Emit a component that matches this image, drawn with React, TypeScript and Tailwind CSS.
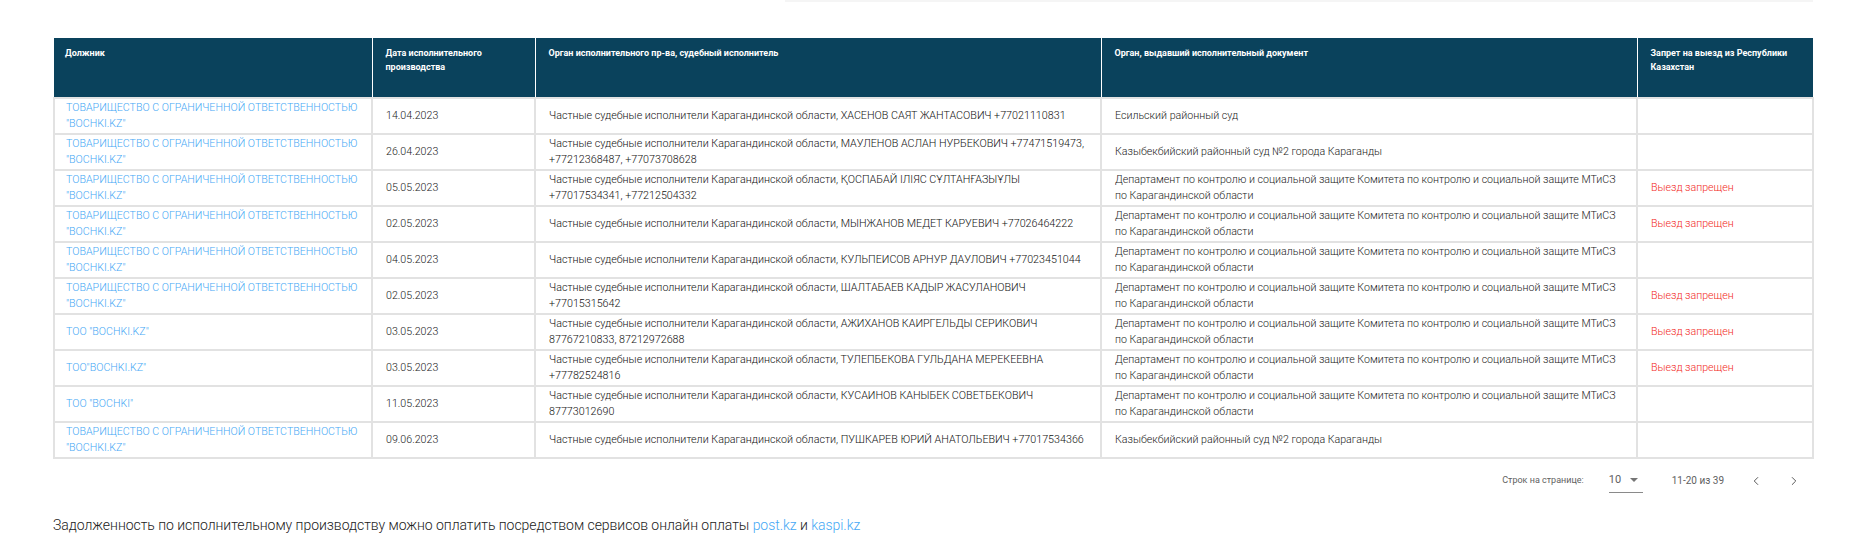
import { ChevronLeft, ChevronRight } from "lucide-react";

const dep = "Департамент по контролю и социальной защите Комитета по контролю и социальной защите МТиСЗ по Карагандинской области";
const prefix = "Частные судебные исполнители Карагандинской области, ";
const longName = 'ТОВАРИЩЕСТВО С ОГРАНИЧЕННОЙ ОТВЕТСТВЕННОСТЬЮ "BOCHKI.KZ"';

const rows = [
  { name: longName, date: "14.04.2023", org: prefix + "ХАСЕНОВ САЯТ ЖАНТАСОВИЧ +77021110831", doc: "Есильский районный суд", ban: false },
  { name: longName, date: "26.04.2023", org: prefix + "МАУЛЕНОВ АСЛАН НУРБЕКОВИЧ +77471519473, +77212368487, +77073708628", doc: "Казыбекбийский районный суд №2 города Караганды", ban: false },
  { name: longName, date: "05.05.2023", org: prefix + "ҚОСПАБАЙ ІЛІЯС СҰЛТАНҒАЗЫҰЛЫ +77017534341, +77212504332", doc: dep, ban: true },
  { name: longName, date: "02.05.2023", org: prefix + "МЫНЖАНОВ МЕДЕТ КАРУЕВИЧ +77026464222", doc: dep, ban: true },
  { name: longName, date: "04.05.2023", org: prefix + "КУЛЬПЕИСОВ АРНУР ДАУЛОВИЧ +77023451044", doc: dep, ban: false },
  { name: longName, date: "02.05.2023", org: prefix + "ШАЛТАБАЕВ КАДЫР ЖАСУЛАНОВИЧ +77015315642", doc: dep, ban: true },
  { name: 'ТОО "BOCHKI.KZ"', date: "03.05.2023", org: prefix + "АЖИХАНОВ КАИРГЕЛЬДЫ СЕРИКОВИЧ 87767210833, 87212972688", doc: dep, ban: true },
  { name: 'ТОО"BOCHKI.KZ"', date: "03.05.2023", org: prefix + "ТУЛЕПБЕКОВА ГУЛЬДАНА МЕРЕКЕЕВНА +77782524816", doc: dep, ban: true },
  { name: 'ТОО "BOCHKI"', date: "11.05.2023", org: prefix + "КУСАИНОВ КАНЫБЕК СОВЕТБЕКОВИЧ 87773012690", doc: dep, ban: false },
  { name: longName, date: "09.06.2023", org: prefix + "ПУШКАРЕВ ЮРИЙ АНАТОЛЬЕВИЧ +77017534366", doc: "Казыбекбийский районный суд №2 города Караганды", ban: false },
];

const headers = [
  { label: "Должник", w: "w-[318px]", pl: "pl-[11px]" },
  { label: "Дата исполнительного производства", w: "w-[163px]", pl: "pl-[13px]" },
  { label: "Орган исполнительного пр-ва, судебный исполнитель", w: "w-[566px]", pl: "pl-[13px]" },
  { label: "Орган, выдавший исполнительный документ", w: "w-[536px]", pl: "pl-[13px]" },
  { label: "Запрет на выезд из Республики Казахстан", w: "w-[176px]", pl: "pl-[13px]" },
];

const App = () => {
  return (
    <div className="w-[1855px] h-[534px] overflow-hidden bg-white font-['Roboto',sans-serif]">
      <div className="flex justify-end pr-[42px]">
        <div className="w-[1028px] h-[2px] bg-[#f5f5f5]" />
      </div>

      <div className="pl-[53px] pr-[42px] pt-[36px]">
        <table className="w-[1759px] table-fixed border-collapse">
          <thead>
            <tr className="h-[60px] bg-[#0a425c]">
              {headers.map((h) => (
                <th key={h.label} className={`${h.w} ${h.pl} align-top border-x border-white first:border-l-0 last:border-r-0 pr-[12px] pt-[8px] text-left text-[9px] leading-[14px] font-bold text-white`}>
                  {h.label}
                </th>
              ))}
            </tr>
          </thead>
          <tbody>
            {rows.map((r, i) => (
              <tr key={i} className="h-[36px] text-[10.65px] leading-[16px] font-light text-[#212121]">
                <td className="border-2 border-[#e2e2e2] pl-[11px] pr-[4px] text-[#45a8f5]">{r.name}</td>
                <td className="border-2 border-[#e2e2e2] pl-[13px] pr-[4px]">{r.date}</td>
                <td className="border-2 border-[#e2e2e2] pl-[13px] pr-[14px] text-[10.72px] text-[#111111]">{r.org}</td>
                <td className="border-2 border-[#e2e2e2] pl-[13px] pr-[14px]">{r.doc}</td>
                <td className="border-2 border-[#e2e2e2] pl-[13px] pr-[4px] text-[#f2281c]">{r.ban ? "Выезд запрещен" : ""}</td>
              </tr>
            ))}
          </tbody>
        </table>

        <div className="flex items-center justify-end h-[43px] pr-[12px] text-[9px] text-[#616161]">
          <span>Строк на странице:</span>
          <div className="ml-[25px] flex items-center justify-between w-[34px] h-[24px] border-b border-[#8a8a8a] text-[11px]">
            <span>10</span>
            <span className="mr-[5px] w-0 h-0 border-x-[4px] border-x-transparent border-t-[4px] border-t-[#757575]" />
          </div>
          <span className="ml-[29px] text-[10px]">11-20 из 39</span>
          <ChevronLeft className="ml-[25px] w-[14px] h-[14px] text-[#424242]" strokeWidth={1.5} />
          <ChevronRight className="ml-[24px] w-[14px] h-[14px] text-[#424242]" strokeWidth={1.5} />
        </div>

        <p className="mt-[13px] text-[14px] leading-[20px] tracking-[-0.04px] font-light text-[#212121]">
          Задолженность по исполнительному производству можно оплатить посредством сервисов онлайн оплаты{" "}
          <a className="text-[#45a8f5]">post.kz</a> и <a className="text-[#45a8f5]">kaspi.kz</a>
        </p>
      </div>
    </div>
  );
};

export default App;
